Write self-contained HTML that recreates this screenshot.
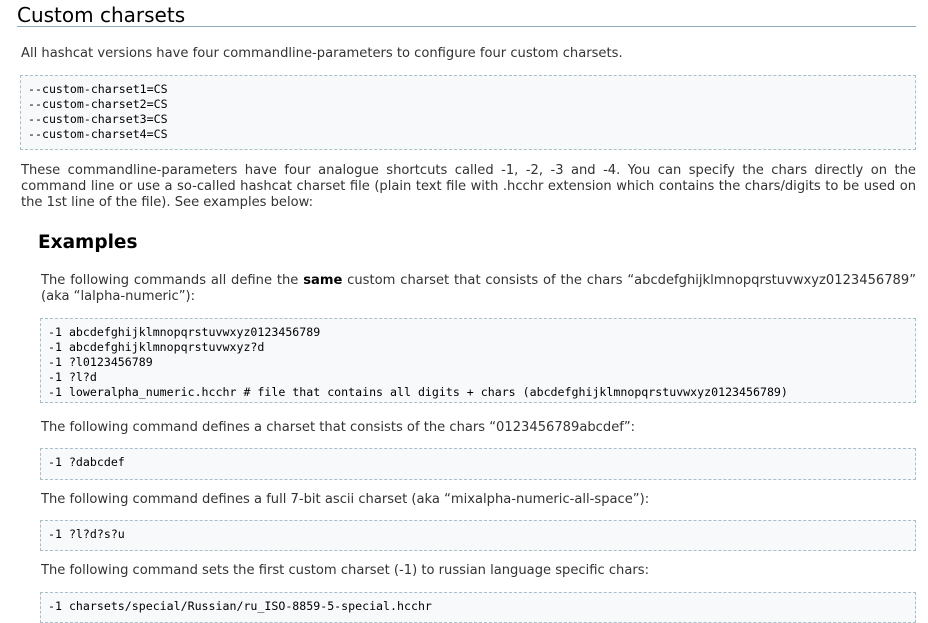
<!DOCTYPE html>
<html><head><meta charset="utf-8"><style>
body{margin:0;background:#fff;width:928px;height:623px;overflow:hidden;font-family:"DejaVu Sans",Verdana,sans-serif;font-size:13.1px;color:#333;}
.h1{position:absolute;left:17px;top:2px;width:899px;font-size:20px;color:#000;border-bottom:1px solid #8cacbb;height:24px;line-height:26px;}
.p{position:absolute;line-height:16px;text-align:justify;}
pre{position:absolute;margin:0;box-sizing:border-box;border:1px dashed #a8bfca;background:#f7f9fa;font-family:"DejaVu Sans Mono",monospace;font-size:11.6px;line-height:15px;padding:6px 7px;color:#000;}
.h2{position:absolute;left:38px;top:232px;font-size:18.5px;font-weight:bold;color:#000;}
</style></head><body>
<div class="h1">Custom charsets</div>
<div class="p" style="left:21px;top:46px;width:895px">All hashcat versions have four commandline-parameters to configure four custom charsets.</div>
<pre style="left:20px;top:75px;width:896px;height:75px">--custom-charset1=CS
--custom-charset2=CS
--custom-charset3=CS
--custom-charset4=CS</pre>
<div class="p" style="left:21px;top:163px;width:895px">These commandline-parameters have four analogue shortcuts called -1, -2, -3 and -4. You can specify the chars directly on the command line or use a so-called hashcat charset file (plain text file with .hcchr extension which contains the chars/digits to be used on the 1st line of the file). See examples below:</div>
<div class="h2">Examples</div>
<div class="p" style="left:41px;top:273px;width:875px">The following commands all define the <b style="color:#000">same</b> custom charset that consists of the chars “abcdefghijklmnopqrstuvwxyz0123456789” (aka “lalpha-numeric”):</div>
<pre style="left:40px;top:318px;width:876px;height:85px">-1 abcdefghijklmnopqrstuvwxyz0123456789
-1 abcdefghijklmnopqrstuvwxyz?d
-1 ?l0123456789
-1 ?l?d
-1 loweralpha_numeric.hcchr # file that contains all digits + chars (abcdefghijklmnopqrstuvwxyz0123456789)</pre>
<div class="p" style="left:41px;top:420px">The following command defines a charset that consists of the chars “0123456789abcdef”:</div>
<pre style="left:40px;top:448px;width:876px;height:32px">-1 ?dabcdef</pre>
<div class="p" style="left:41px;top:492px">The following command defines a full 7-bit ascii charset (aka “mixalpha-numeric-all-space”):</div>
<pre style="left:40px;top:520px;width:876px;height:31px">-1 ?l?d?s?u</pre>
<div class="p" style="left:41px;top:563px">The following command sets the first custom charset (-1) to russian language specific chars:</div>
<pre style="left:40px;top:592px;width:876px;height:31px">-1 charsets/special/Russian/ru_ISO-8859-5-special.hcchr</pre>
</body></html>
